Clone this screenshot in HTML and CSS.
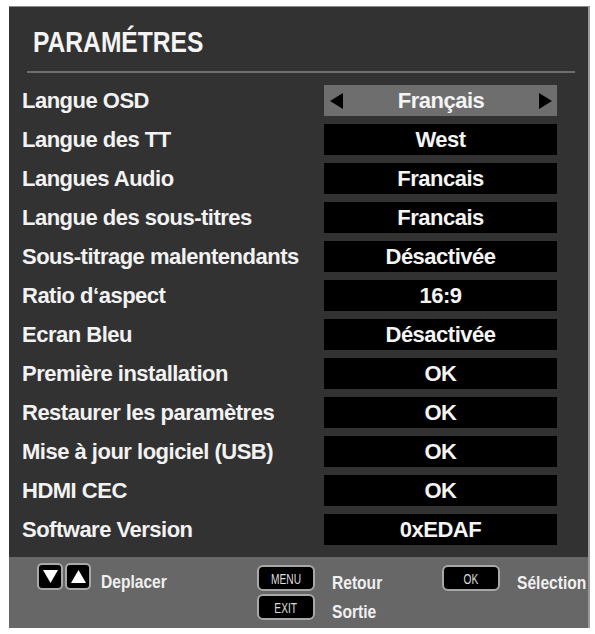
FILE: index.html
```html
<!DOCTYPE html>
<html lang="fr">
<head>
<meta charset="utf-8">
<title>Paramètres</title>
<link rel="stylesheet" href="styles.css">
</head>
<body>
<div class="panel">
  <div class="main">
    <h1 class="title"><span class="narrow">PARAMÉTRES</span></h1>
    <div class="rule"></div>
    <div class="rows">
      <div class="row"><span class="label">Langue OSD</span>
        <span class="value selected">
          <svg class="tri" width="13" height="16" viewBox="0 0 13 16"><path d="M0 8 L13 0 L13 16 Z" fill="#000"/></svg>
          <span class="vtext">Français</span>
          <svg class="tri" width="13" height="16" viewBox="0 0 13 16"><path d="M13 8 L0 0 L0 16 Z" fill="#000"/></svg>
        </span></div>
      <div class="row"><span class="label">Langue des TT</span><span class="value">West</span></div>
      <div class="row"><span class="label">Langues Audio</span><span class="value">Francais</span></div>
      <div class="row"><span class="label">Langue des sous-titres</span><span class="value">Francais</span></div>
      <div class="row"><span class="label">Sous-titrage malentendants</span><span class="value">Désactivée</span></div>
      <div class="row"><span class="label">Ratio d‘aspect</span><span class="value">16:9</span></div>
      <div class="row"><span class="label">Ecran Bleu</span><span class="value">Désactivée</span></div>
      <div class="row"><span class="label">Première installation</span><span class="value">OK</span></div>
      <div class="row"><span class="label">Restaurer les paramètres</span><span class="value">OK</span></div>
      <div class="row"><span class="label">Mise à jour logiciel (USB)</span><span class="value">OK</span></div>
      <div class="row"><span class="label">HDMI CEC</span><span class="value">OK</span></div>
      <div class="row"><span class="label">Software Version</span><span class="value">0xEDAF</span></div>
    </div>
  </div>
  <div class="footer">
    <div class="fgroup move">
      <span class="key arrow"><svg width="15" height="13" viewBox="0 0 15 13"><path d="M0 0 L15 0 L7.5 13 Z" fill="#fff"/></svg></span>
      <span class="key arrow"><svg width="15" height="13" viewBox="0 0 15 13"><path d="M0 13 L15 13 L7.5 0 Z" fill="#fff"/></svg></span>
      <span class="ftext"><span class="narrow">Deplacer</span></span>
    </div>
    <div class="fgroup pairs">
      <span class="key btn"><span class="btext">MENU</span></span><span class="ftext"><span class="narrow">Retour</span></span>
      <span class="key btn"><span class="btext">EXIT</span></span><span class="ftext"><span class="narrow">Sortie</span></span>
    </div>
    <div class="fgroup select">
      <span class="key btn"><span class="btext">OK</span></span><span class="ftext"><span class="narrow">Sélection</span></span>
    </div>
  </div>
</div>
</body>
</html>
```
FILE: styles.css
```css
html, body {
  margin: 0;
  padding: 0;
  background: #ffffff;
}
body {
  font-family: "Liberation Sans", Arial, sans-serif;
  color: #ffffff;
}
.narrow {
  display: inline-block;
  transform: scaleX(0.82);
  transform-origin: left center;
  white-space: nowrap;
}
.panel {
  margin: 6px 0 0 9px;
  width: 581px;
  height: 622px;
  display: flex;
  flex-direction: column;
  box-sizing: border-box;
  border-top: 1px solid #8a8a8a;
  border-right: 2px solid #9a9a9a;
  background: #323232;
}
.main {
  height: 550px;
  background: #323232;
  padding-top: 20px;
  box-sizing: border-box;
}
.title {
  margin: 0 0 0 24px;
  font-weight: bold;
  font-size: 30px;
  line-height: 30px;
  height: 30px;
  color: #f4f4f4;
}
.rule {
  margin: 14px 13px 0 18px;
  height: 2px;
  background: #6f6f6f;
}
.rows {
  margin-top: 12px;
  display: flex;
  flex-direction: column;
  gap: 8px;
}
.row {
  display: flex;
  align-items: center;
  height: 31px;
  padding-left: 13px;
}
.label {
  flex: 1;
  font-weight: bold;
  font-size: 22px;
  letter-spacing: -0.5px;
  line-height: 31px;
  color: #f2f2f2;
  white-space: nowrap;
}
.value {
  width: 233px;
  height: 31px;
  margin-right: 31px;
  background: #000;
  display: flex;
  align-items: center;
  justify-content: center;
  font-weight: bold;
  font-size: 22px;
  letter-spacing: -0.5px;
  line-height: 31px;
  color: #f4f4f4;
}
.value.selected {
  background: #6e6e6e;
  justify-content: space-between;
  padding: 0 5px 0 6px;
  box-sizing: border-box;
}
.tri {
  display: block;
}
.footer {
  flex: 1;
  background: #676767;
  display: grid;
  grid-template-columns: 220px 185px 1fr;
  padding: 6px 0 0 28px;
  box-sizing: border-box;
  align-items: start;
}
.fgroup {
  display: flex;
  align-items: center;
}
.ftext {
  font-weight: bold;
  font-size: 19px;
  line-height: 26px;
  padding-top: 5px;
  margin-bottom: -5px;
  color: #f0f0f0;
  white-space: nowrap;
}
.key {
  box-sizing: border-box;
  background: #000;
  border: 2px solid #a8a8a8;
  display: flex;
  align-items: center;
  justify-content: center;
}
.arrow {
  width: 26px;
  height: 27px;
  border-radius: 5px;
  margin-right: 2px;
}
.move .ftext {
  margin-left: 8px;
}
.pairs {
  display: grid;
  grid-template-columns: 58px auto;
  column-gap: 17px;
  row-gap: 3px;
  margin-top: 2px;
}
.btn {
  width: 58px;
  height: 26px;
  border-radius: 6px;
  font-size: 15px;
  color: #dcdcdc;
}
.btext {
  display: inline-block;
  transform: scaleX(0.68);
  white-space: nowrap;
}
.select {
  margin-top: 2px;
  gap: 17px;
}
```
